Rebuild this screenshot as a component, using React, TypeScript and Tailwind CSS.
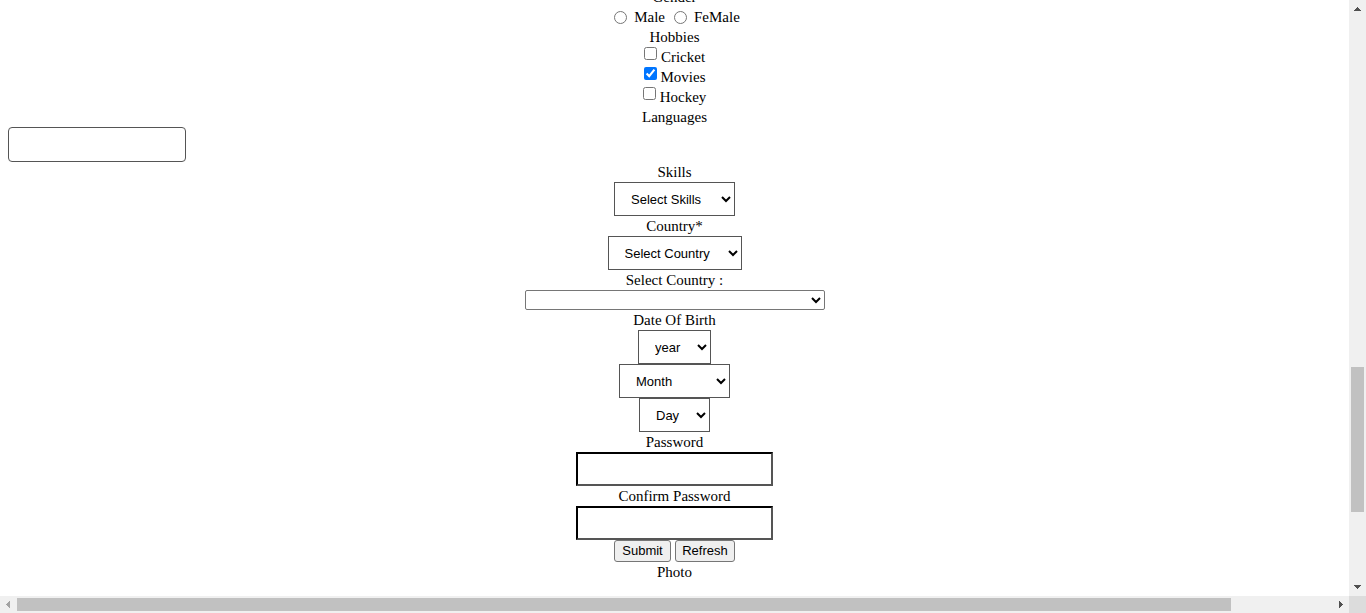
import type { ReactNode } from "react";

function Line({ children }: { children: ReactNode }) {
  return <div className="flex h-5 justify-center">{children}</div>;
}

const boxed =
  "h-[34px] border border-[#555] bg-white pr-[13px] pl-3 font-['Liberation_Sans',Arial,sans-serif] text-[13px] text-black";
const secret =
  "h-[34px] w-[197px] border-2 border-t-black border-l-black border-r-[#555] border-b-[#555] bg-white px-5 text-[13px]";
const action =
  "h-[22px] rounded-[3px] border border-[#767676] bg-[#efefef] font-['Liberation_Sans',Arial,sans-serif] text-[13px] text-black";

function Hobby({ name, checked = false }: { name: string; checked?: boolean }) {
  return (
    <Line>
      <label className="flex items-start gap-1">
        <input type="checkbox" name="hobbies" value={name} defaultChecked={checked} className="size-[13px]" />
        {name}
      </label>
    </Line>
  );
}

function Arrow({ points, color = "#505050" }: { points: string; color?: string }) {
  return (
    <svg className="size-[17px] shrink-0" viewBox="0 0 17 17" shapeRendering="crispEdges" aria-hidden="true">
      <polygon points={points} fill={color} />
    </svg>
  );
}

export default function App() {
  return (
    <div className="grid h-screen grid-cols-[minmax(0,1fr)_17px] grid-rows-[minmax(0,1fr)_17px] overflow-hidden bg-white font-['Liberation_Serif','Times_New_Roman',serif] text-[15px] leading-5 text-black">
      <main className="overflow-hidden">
        <form className="-mt-[13px]" onSubmit={(e) => e.preventDefault()}>
          <Line>Gender</Line>
          <div className="flex h-5 items-center justify-center gap-1">
            <label className="flex items-center gap-[7px] pl-[5px]">
              <input type="radio" name="gender" className="size-[13px]" />
              Male
            </label>
            <label className="flex items-center gap-[7px] pl-[5px]">
              <input type="radio" name="gender" className="size-[13px]" />
              FeMale
            </label>
          </div>
          <Line>Hobbies</Line>
          <Hobby name="Cricket" />
          <Hobby name="Movies" checked />
          <Hobby name="Hockey" />
          <Line>
            <label htmlFor="languages">Languages</label>
          </Line>
          <div className="flex pl-2">
            <input id="languages" type="text" className="h-[35px] w-[178px] rounded-[4px] border border-[#555] bg-white px-2" />
          </div>
          <div className="flex flex-col items-center">
            <label htmlFor="skills">Skills</label>
            <select id="skills" className={`${boxed} w-[121px]`}>
              <option>Select Skills</option>
            </select>
            <label htmlFor="country">Country*</label>
            <select id="country" className={`${boxed} w-[134px]`}>
              <option>Select Country</option>
            </select>
            <label htmlFor="country2">Select Country :</label>
            <select id="country2" className="h-5 w-[300px] rounded-[2px] border border-[#767676] bg-white pr-px text-[13px]">
              <option></option>
            </select>
            <label htmlFor="year">Date Of Birth</label>
            <select id="year" className={`${boxed} w-[73px]`}>
              <option>year</option>
            </select>
            <select aria-label="Month" className={`${boxed} w-[111px]`}>
              <option>Month</option>
            </select>
            <select aria-label="Day" className={`${boxed} w-[71px]`}>
              <option>Day</option>
            </select>
            <label htmlFor="password">Password</label>
            <input id="password" type="password" className={secret} />
            <label htmlFor="confirm">Confirm Password</label>
            <input id="confirm" type="password" className={secret} />
            <div className="flex gap-1">
              <button type="submit" className={`${action} w-[57px]`}>Submit</button>
              <button type="button" className={`${action} w-[60px]`}>Refresh</button>
            </div>
            <div>Photo</div>
          </div>
        </form>
      </main>
      <div className="flex flex-col items-center bg-[#f0f0f0]">
        <Arrow points="8,7 9,7 12,11 5,11" />
        <div className="grow-[350]" />
        <div className="w-[13px] grow-[145] bg-[#c1c1c1]" />
        <div className="grow-[67]" />
        <Arrow points="5,6 12,6 9,10 8,10" />
      </div>
      <div className="flex items-center bg-[#f0f0f0]">
        <Arrow points="10,5 10,12 6,9 6,8" color="#a3a3a3" />
        <div className="h-[13px] grow-[1214] bg-[#c1c1c1]" />
        <div className="grow-[101]" />
        <Arrow points="7,5 7,12 11,9 11,8" />
      </div>
      <div className="bg-[#dcdcdc]" />
    </div>
  );
}
